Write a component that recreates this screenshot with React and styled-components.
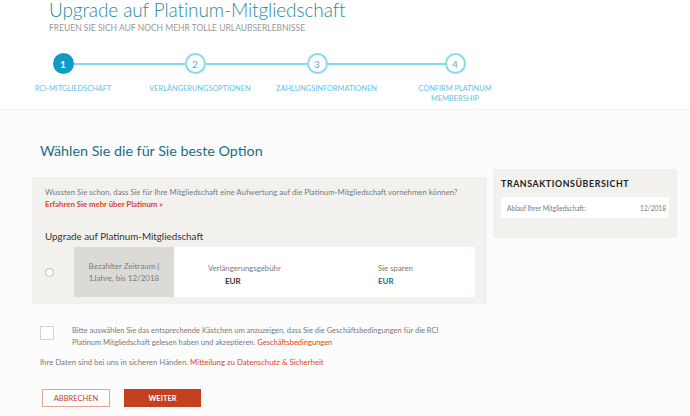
import React from 'react';
import styled, { createGlobalStyle } from 'styled-components';

const GlobalStyle = createGlobalStyle`
  html, body {
    margin: 0;
    padding: 0;
    background: #fcfcfc;
  }
  body {
    font-family: Lato, "Open Sans", Arial, sans-serif;
    color: #777;
  }
`;

// Header

const Header = styled.header`
  background: #fff;
  height: 110px;
  padding-left: 49px;
  box-sizing: border-box;
  border-bottom: 1px solid #f2f2f2;
  overflow: hidden;
`;

const Title = styled.h1`
  margin: -1px 0 0;
  font-size: 19px;
  line-height: 22px;
  font-weight: 300;
  letter-spacing: -0.1px;
  color: #2a8aa0;
`;

const Subtitle = styled.div`
  margin-top: 2px;
  font-size: 8.5px;
  line-height: 10px;
  text-transform: uppercase;
  color: #999;
`;

const Stepper = styled.div`
  display: grid;
  grid-template-columns: 126px 138px 106px 170px;
  margin: 20px 0 0 -49px;
`;

const Step = styled.div`
  display: flex;
  flex-direction: column;
  align-items: stretch;
`;

const Track = styled.div`
  display: flex;
  align-items: center;
  height: 21px;
`;

const Line = styled.div`
  flex: 1;
  height: 2px;
  background: ${p => (p.$off ? 'transparent' : '#8dd6f0')};
`;

const Circle = styled.div`
  width: 21px;
  height: 21px;
  box-sizing: border-box;
  border-radius: 50%;
  border: 2px solid ${p => (p.$active ? '#1199c8' : '#8dd6f0')};
  background: ${p => (p.$active ? '#1199c8' : '#fff')};
  color: ${p => (p.$active ? '#fff' : '#4cb2dc')};
  font-size: 10px;
  font-weight: ${p => (p.$active ? 700 : 400)};
  display: flex;
  align-items: center;
  justify-content: center;
`;

const StepLabel = styled.div`
  margin-top: 10px;
  padding-left: ${p => p.$shift * 2}px;
  text-align: center;
  font-size: 7.4px;
  line-height: 10px;
  text-transform: uppercase;
  color: #6cc0e6;
`;

// Main content

const Main = styled.main`
  padding: 0 13px 0 32px;
`;

const SectionTitle = styled.h2`
  margin: 32px 0 0 8px;
  font-size: 14.3px;
  line-height: 18px;
  font-weight: 400;
  color: #186f85;
`;

const Columns = styled.div`
  display: flex;
  align-items: flex-start;
  gap: 6px;
  margin-top: 9px;
`;

const Panel = styled.section`
  background: #f3f1ed;
  box-sizing: border-box;
`;

const OptionsPanel = styled(Panel)`
  width: 455px;
  height: 127px;
  margin-top: 8px;
  padding: 9px 12px 0 13px;
`;

const Hint = styled.p`
  margin: 0;
  font-size: 7.8px;
  line-height: 12px;
  color: #7a7a7a;
`;

const Link = styled.a`
  color: #d4471f;
  text-decoration: none;
  font-weight: ${p => (p.$strong ? 700 : 400)};
`;

const OptionTitle = styled.h3`
  margin: 19px 0 0;
  font-size: 9.8px;
  line-height: 14px;
  font-weight: 400;
  color: #333;
`;

const OptionRow = styled.div`
  display: flex;
  align-items: stretch;
  margin-top: 4px;
  height: 50px;
`;

const RadioCell = styled.div`
  width: 29px;
  display: flex;
  align-items: center;
`;

const Radio = styled.span`
  width: 7px;
  height: 7px;
  border-radius: 50%;
  border: 1px solid #bbb;
  background: #fff;
`;

const OptionBox = styled.div`
  flex: 1;
  display: flex;
  background: #fff;
`;

const Period = styled.div`
  width: 100px;
  background: #dcdad6;
  display: flex;
  align-items: center;
  justify-content: center;
`;

const PeriodText = styled.span`
  text-align: center;
  font-size: 8px;
  line-height: 12px;
  color: #7a7a7a;
`;

const PriceCol = styled.div`
  width: ${p => p.$width}px;
  padding: 16px 0 0 ${p => p.$indent}px;
  box-sizing: border-box;
`;

const PriceLabel = styled.div`
  font-size: 7.8px;
  line-height: 10px;
  color: #7a7a7a;
`;

const PriceValue = styled.div`
  margin: 3px 0 0 ${p => p.$indent || 0}px;
  font-size: 8px;
  line-height: 10px;
  font-weight: 700;
  color: ${p => (p.$accent ? '#166f86' : '#333')};
`;

const SummaryPanel = styled(Panel)`
  width: 184px;
  height: 69px;
  padding: 9px 8px 0 8px;
`;

const SummaryTitle = styled.h3`
  margin: 0;
  font-size: 8.8px;
  line-height: 12px;
  font-weight: 700;
  text-transform: uppercase;
  color: #222;
  letter-spacing: 0.6px;
`;

const SummaryRow = styled.div`
  display: flex;
  justify-content: space-between;
  align-items: center;
  margin-top: 7px;
  height: 21px;
  padding: 0 3px 0 6px;
  background: #fff;
  font-size: 6.6px;
  color: #7a7a7a;
`;

const Terms = styled.div`
  display: flex;
  align-items: flex-start;
  margin: 21px 0 0 8px;
`;

const Checkbox = styled.span`
  flex: none;
  width: 14px;
  height: 14px;
  box-sizing: border-box;
  border: 1px solid #d4d4d4;
  background: #fff;
  margin-top: 1px;
`;

const TermsText = styled.p`
  margin: 0 0 0 18px;
  width: 392px;
  font-size: 7.5px;
  line-height: 12px;
  color: #7a7a7a;
`;

const Privacy = styled.p`
  margin: 7px 0 0 8px;
  font-size: 7.8px;
  line-height: 12px;
  color: #7a7a7a;
`;

const Actions = styled.div`
  display: flex;
  gap: 14px;
  margin: 21px 0 0 10px;
`;

const Button = styled.button`
  width: ${p => p.$width}px;
  height: 18px;
  padding: 0;
  box-sizing: border-box;
  font-family: inherit;
  font-size: 7.5px;
  font-weight: ${p => (p.$primary ? 700 : 400)};
  text-transform: uppercase;
  cursor: pointer;
  border: 1px solid ${p => (p.$primary ? '#c4401f' : '#e3a595')};
  background: ${p => (p.$primary ? '#c4401f' : '#fff')};
  color: ${p => (p.$primary ? '#fff' : '#c4401f')};
`;

const steps = [
  { n: 1, label: 'RCI-Mitgliedschaft', shift: 10 },
  { n: 2, label: 'Verlängerungsoptionen', shift: 5 },
  { n: 3, label: 'Zahlungsinformationen', shift: 6 },
  { n: 4, label: <>Confirm Platinum<br />Membership</>, shift: 0 },
];

const App = () => (
  <>
    <GlobalStyle />
    <Header>
      <Title>Upgrade auf Platinum-Mitgliedschaft</Title>
      <Subtitle>Freuen Sie sich auf noch mehr tolle Urlaubserlebnisse</Subtitle>
      <Stepper>
        {steps.map((s, i) => (
          <Step key={s.n}>
            <Track>
              <Line $off={i === 0} />
              <Circle $active={i === 0}>{s.n}</Circle>
              <Line $off={i === steps.length - 1} />
            </Track>
            <StepLabel $shift={s.shift}>{s.label}</StepLabel>
          </Step>
        ))}
      </Stepper>
    </Header>
    <Main>
      <SectionTitle>Wählen Sie die für Sie beste Option</SectionTitle>
      <Columns>
        <OptionsPanel>
          <Hint>
            Wussten Sie schon, dass Sie für Ihre Mitgliedschaft eine Aufwertung auf die Platinum-Mitgliedschaft vornehmen können?
            <br />
            <Link href="#" $strong>Erfahren Sie mehr über Platinum »</Link>
          </Hint>
          <OptionTitle>Upgrade auf Platinum-Mitgliedschaft</OptionTitle>
          <OptionRow>
            <RadioCell><Radio /></RadioCell>
            <OptionBox>
              <Period>
                <PeriodText>Bezahlter Zeitraum (<br />1Jahre, bis 12/2018</PeriodText>
              </Period>
              <PriceCol $width={170} $indent={34}>
                <PriceLabel>Verlängerungsgebühr</PriceLabel>
                <PriceValue $indent={17}>EUR</PriceValue>
              </PriceCol>
              <PriceCol $width={120} $indent={34}>
                <PriceLabel>Sie sparen</PriceLabel>
                <PriceValue $accent>EUR</PriceValue>
              </PriceCol>
            </OptionBox>
          </OptionRow>
        </OptionsPanel>
        <SummaryPanel>
          <SummaryTitle>Transaktionsübersicht</SummaryTitle>
          <SummaryRow>
            <span>Ablauf Ihrer Mitgliedschaft:</span>
            <span>12/2018</span>
          </SummaryRow>
        </SummaryPanel>
      </Columns>
      <Terms>
        <Checkbox />
        <TermsText>
          Bitte auswählen Sie das entsprechende Kästchen um anzuzeigen, dass Sie die Geschäftsbedingungen für die RCI Platinum Mitgliedschaft gelesen haben und akzeptieren. <Link href="#">Geschäftsbedingungen</Link>
        </TermsText>
      </Terms>
      <Privacy>
        Ihre Daten sind bei uns in sicheren Händen. <Link href="#">Mitteilung zu Datenschutz &amp; Sicherheit</Link>
      </Privacy>
      <Actions>
        <Button $width={68}>Abbrechen</Button>
        <Button $width={77} $primary>Weiter</Button>
      </Actions>
    </Main>
  </>
);

export default App;
